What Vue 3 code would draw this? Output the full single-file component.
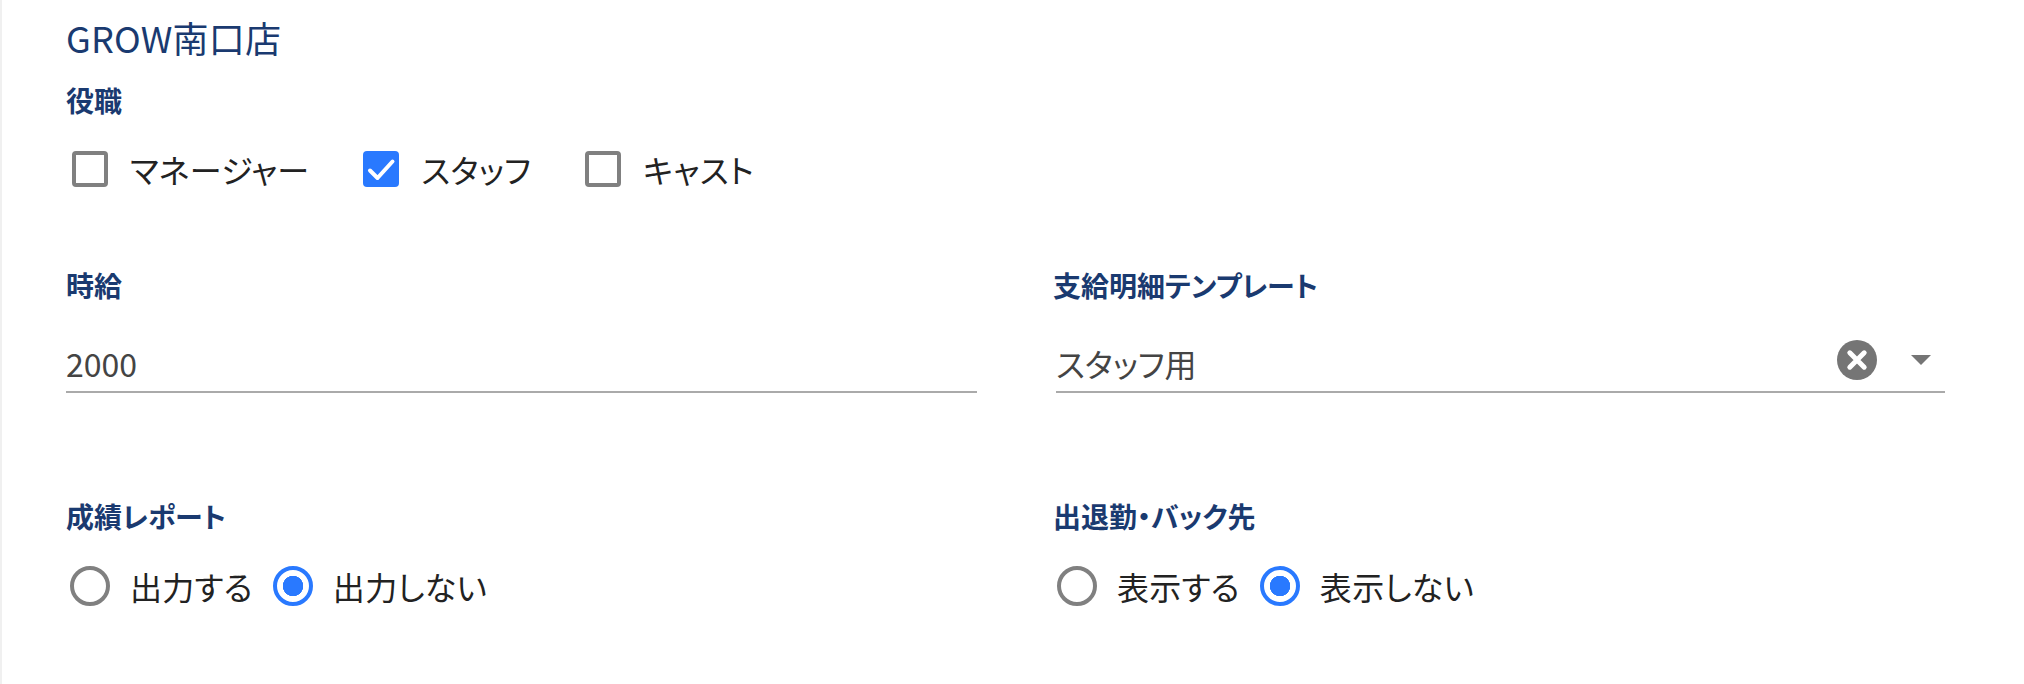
<script setup>
const roles = [
  { label: 'マネージャー', checked: false },
  { label: 'スタッフ', checked: true },
  { label: 'キャスト', checked: false },
]
const reports = [
  { title: '成績レポート', options: [{ label: '出力する', on: false }, { label: '出力しない', on: true }] },
  { title: '出退勤・バック先', options: [{ label: '表示する', on: false }, { label: '表示しない', on: true }] },
]
</script>

<template>
  <div class="page">
    <h1 class="title">GROW南口店</h1>
    <div class="label">役職</div>
    <div class="checks">
      <label v-for="r in roles" :key="r.label" class="check">
        <span class="box" :class="{ on: r.checked }">
          <svg v-if="r.checked" viewBox="0 0 36 36" width="36" height="36">
            <path d="M7 19.5 L14.5 27 L29.5 10.5" fill="none" stroke="#fff" stroke-width="4" stroke-linecap="round" stroke-linejoin="round" />
          </svg>
        </span>
        <span class="opt">{{ r.label }}</span>
      </label>
    </div>
    <div class="cols inputs">
      <div class="field">
        <div class="label">時給</div>
        <div class="control"><span class="value">2000</span></div>
      </div>
      <div class="field right">
        <div class="label">支給明細テンプレート</div>
        <div class="control">
          <span class="value">スタッフ用</span>
          <svg class="clear" viewBox="0 0 40 40" width="40" height="40">
            <circle cx="20" cy="20" r="20" fill="#757575" />
            <path d="M12.8 12.8 L27.2 27.2 M27.2 12.8 L12.8 27.2" stroke="#fff" stroke-width="5" stroke-linecap="round" />
          </svg>
          <svg class="arrow" viewBox="0 0 20 10" width="20" height="10">
            <path d="M0 0 H20 L10 10 Z" fill="#757575" />
          </svg>
        </div>
      </div>
    </div>
    <div class="cols radios">
      <div v-for="g in reports" :key="g.title" class="field">
        <div class="label">{{ g.title }}</div>
        <div class="radio-row">
          <label v-for="o in g.options" :key="o.label" class="radio">
            <span class="ring" :class="{ on: o.on }"></span>
            <span class="opt">{{ o.label }}</span>
          </label>
        </div>
      </div>
    </div>
  </div>
</template>

<style scoped>
.page {
  box-sizing: border-box;
  width: 2024px;
  height: 684px;
  padding: 16px 0 0 64px;
  border-left: 2px solid #f0f0f0;
  background: #fff;
  font-family: "Noto Sans CJK JP", "Noto Sans", sans-serif;
  color: #222;
}
.title {
  margin: 0;
  font-size: 36px;
  line-height: 42px;
  font-weight: 400;
  letter-spacing: 0.2px;
  color: #1a3a70;
}
.label {
  font-size: 28px;
  line-height: 32px;
  font-weight: 700;
  color: #1a3a70;
  font-feature-settings: "palt";
}
.page > .label { margin-top: 26px; }
.checks {
  display: flex;
  margin-top: 33px;
  padding-left: 6px;
}
.check {
  display: flex;
  align-items: center;
  margin-right: 54px;
}
.box {
  box-sizing: border-box;
  width: 36px;
  height: 36px;
  border: 4px solid #808080;
  border-radius: 4px;
  margin-right: 22px;
}
.box.on {
  border: 0;
  background: #2979ff;
}
.box svg { display: block; }
.opt {
  font-size: 32px;
  line-height: 40px;
  letter-spacing: 0.3px;
  font-feature-settings: "palt";
}
.cols {
  display: grid;
  grid-template-columns: 911px 892px;
  column-gap: 76px;
}
.inputs { margin-top: 80px; }
.control {
  display: flex;
  align-items: center;
  height: 62px;
  margin-top: 28px;
  border-bottom: 2px solid #aaa;
}
.right .control { margin-left: 3px; }
.value {
  flex: 1;
  padding-top: 5px;
  font-size: 32px;
  line-height: 44px;
  color: #444;
  font-feature-settings: "palt";
}
.clear { display: block; }
.arrow { display: block; margin: 0 14px 0 34px; }
.radios { margin-top: 107px; }
.radio-row {
  display: flex;
  margin-top: 34px;
  padding-left: 4px;
}
.radio {
  display: flex;
  align-items: center;
  margin-right: 20px;
}
.ring {
  box-sizing: border-box;
  width: 40px;
  height: 40px;
  border: 4px solid #808080;
  border-radius: 50%;
  margin-right: 20px;
  background: #fff;
}
.ring.on {
  border-color: #2979ff;
  background: radial-gradient(circle, #2979ff 0 10px, #fff 10.5px);
}
</style>
